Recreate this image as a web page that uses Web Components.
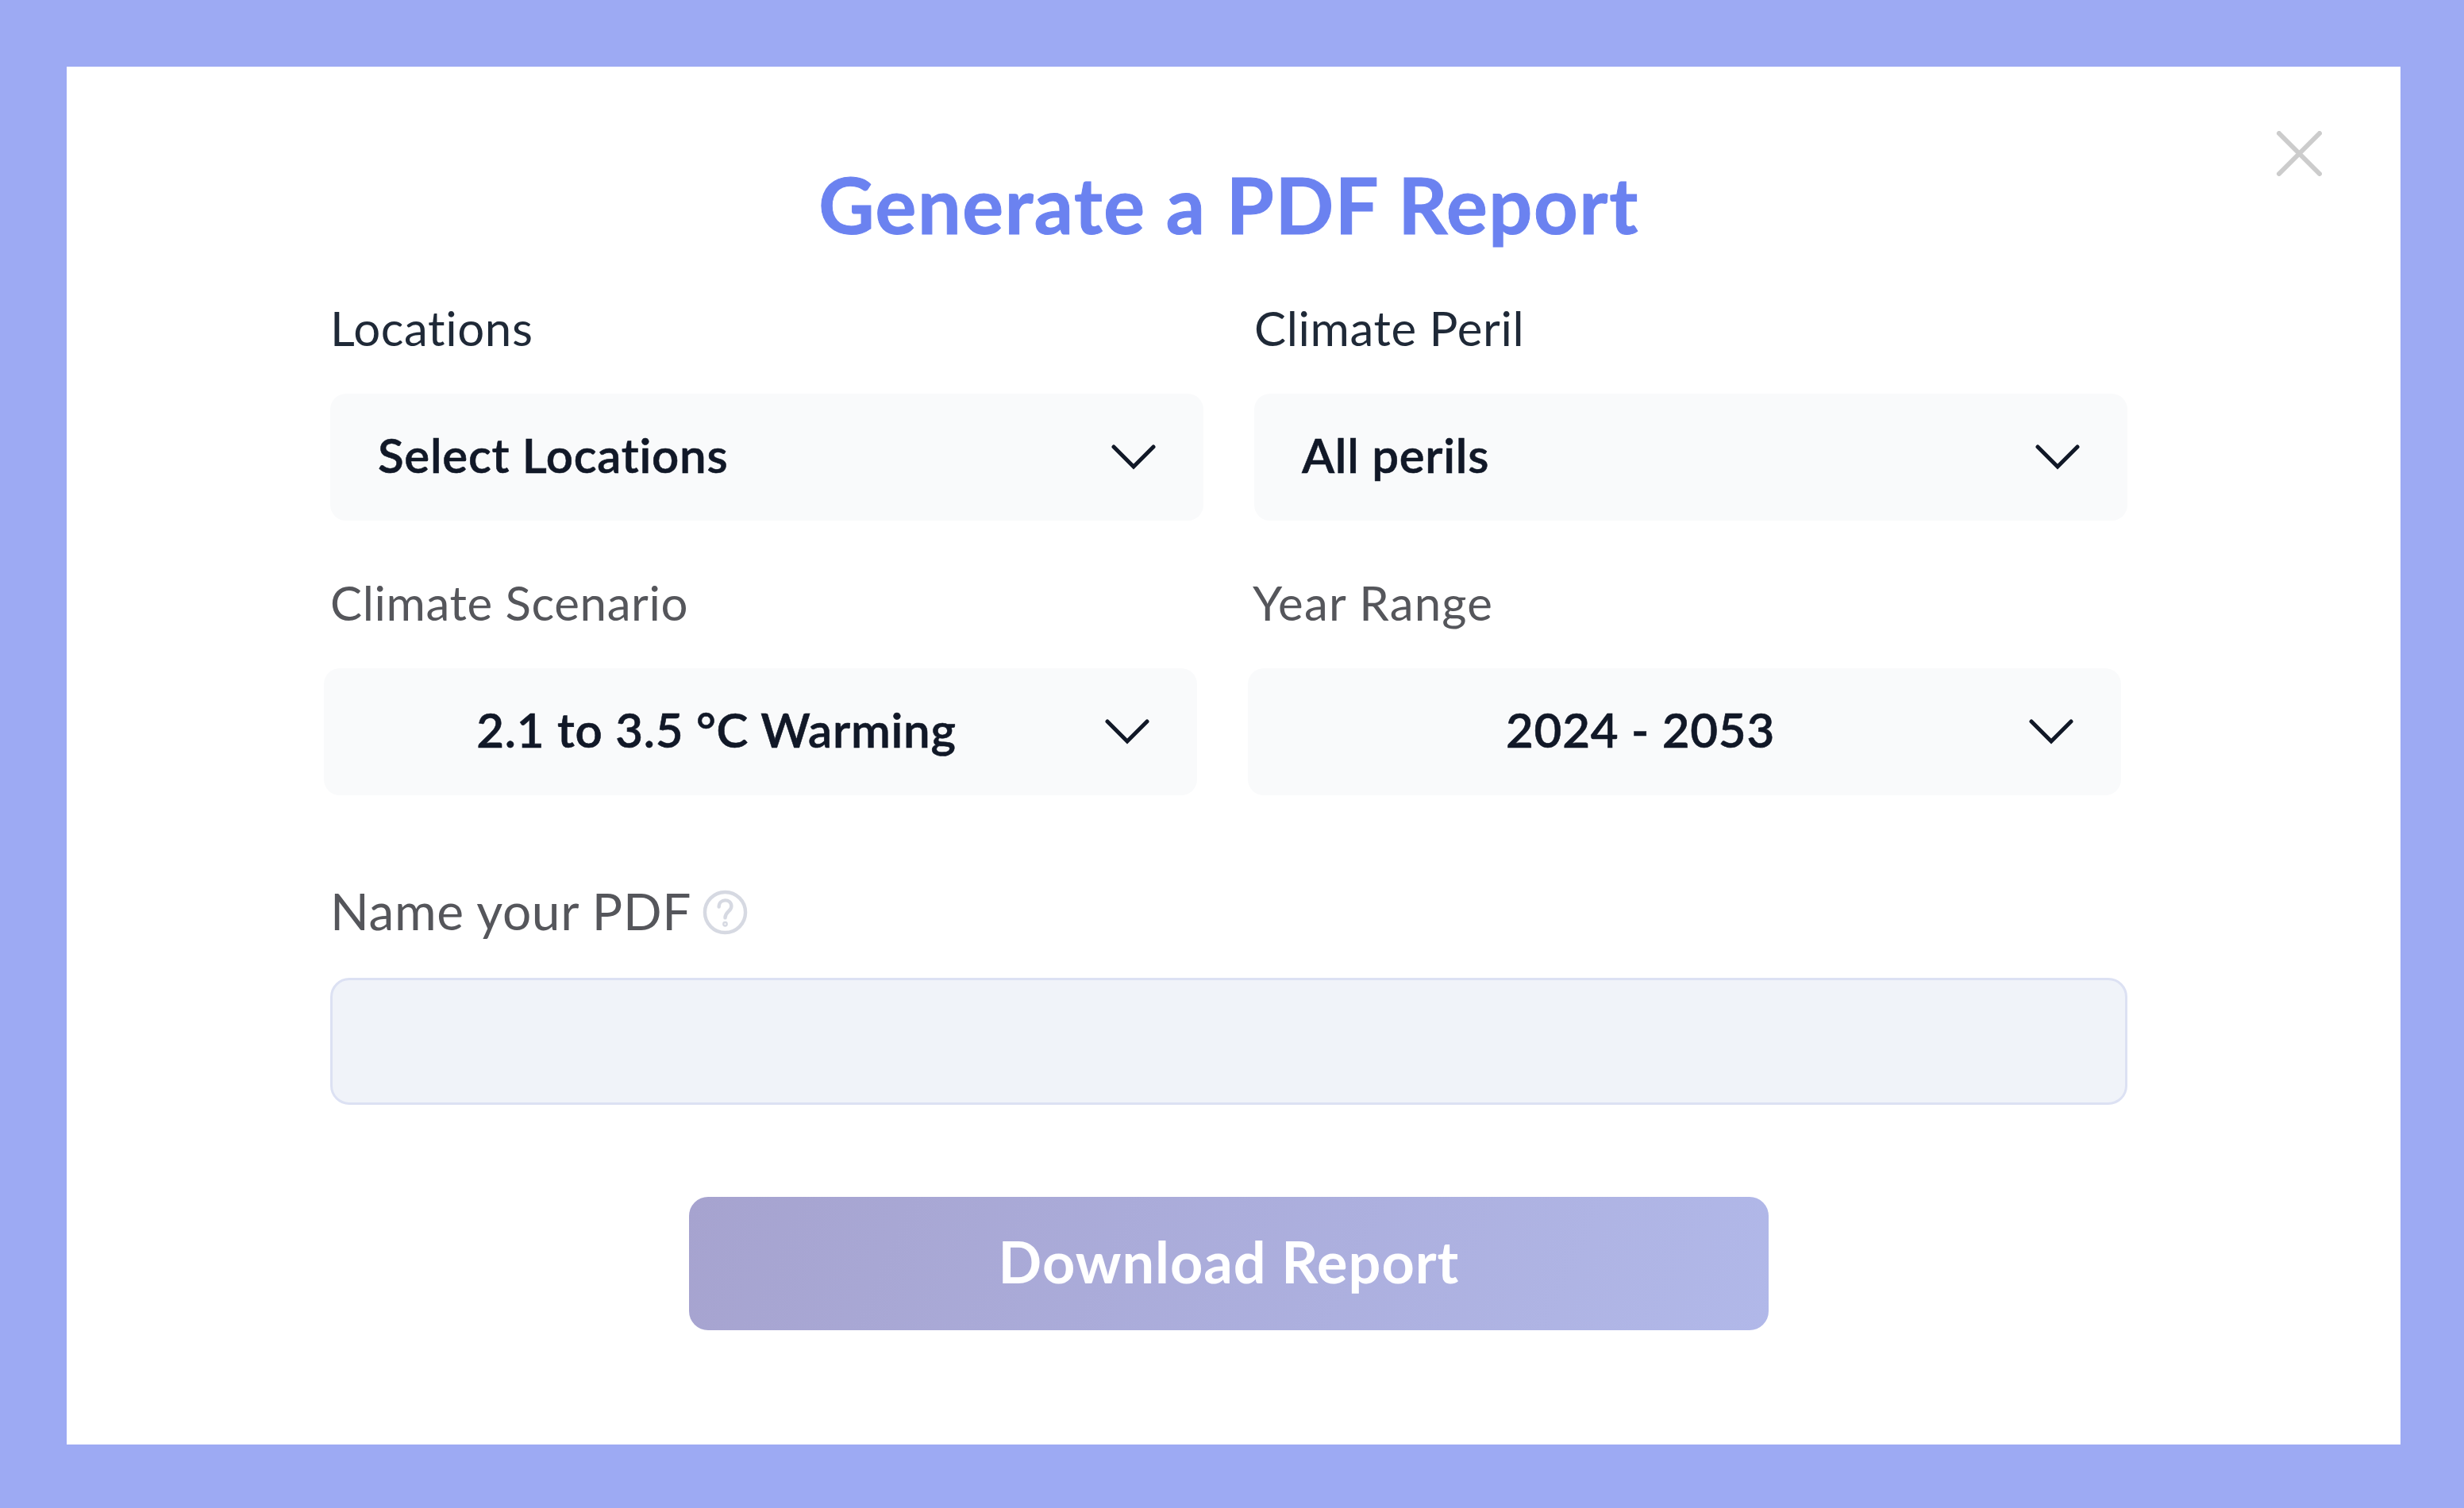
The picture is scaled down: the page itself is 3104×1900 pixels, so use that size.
<!DOCTYPE html>
<html><head><meta charset="utf-8"><style>
html,body{margin:0;height:100%;background:#9daaf3}
body{box-sizing:border-box;padding:84px 80px 80px 84px;height:1900px;font-family:Lato,"Liberation Sans",sans-serif}
</style></head><body>
<report-modal>
<span slot="title">Generate a PDF Report</span>
<form-select label="Locations" value="Select Locations" tone="dark"></form-select>
<form-select label="Climate Peril" value="All perils" tone="dark"></form-select>
<form-select label="Climate Scenario" value="2.1 to 3.5 °C Warming" centered shift></form-select>
<form-select label="Year Range" value="2024 - 2053" centered shift wide></form-select>
</report-modal>
<script>
class FormSelect extends HTMLElement{
 constructor(){super();this.attachShadow({mode:'open'})}
 connectedCallback(){
  const dark=this.getAttribute('tone')==='dark';
  const c=this.hasAttribute('centered'),s=this.hasAttribute('shift'),w=this.hasAttribute('wide');
  this.shadowRoot.innerHTML=`<style>
  :host{display:flex;flex-direction:column;min-width:0}
  .l{height:78px;line-height:78px;font-size:60px;color:${dark?'#1f2937':'#55565b'};margin-bottom:44px;letter-spacing:${w?1.2:.6}px;${w?'margin-left:-2px;':''}}
  .b{height:160px;margin-left:${s?-8:0}px;margin-right:${s?8:0}px;background:#f9fafb;border-radius:20px;display:flex;align-items:center;padding:0 60px;box-sizing:border-box;color:#111827;font-size:60px;font-weight:600;letter-spacing:.75px;-webkit-text-stroke:.6px #111827}
  .v{flex:1;padding-bottom:6px;${c?'text-align:center;padding-right:35px':''}}
  svg{width:56px;height:32px;flex:none;margin-left:20px}
  </style><div class="l">${this.getAttribute('label')}</div><div class="b"><span class="v">${this.getAttribute('value')}</span>
  <svg viewBox="0 0 56 32" fill="none" stroke="#111827" stroke-width="5" stroke-linecap="round" stroke-linejoin="miter"><path d="M3 3 28 28 53 3"/></svg></div>`;
 }
}
customElements.define('form-select',FormSelect);
class PdfName extends HTMLElement{
 constructor(){super();this.attachShadow({mode:'open'}).innerHTML=`<style>
 :host{display:flex;flex-direction:column}
 .l{height:80px;line-height:80px;font-size:64px;color:#55565b;display:flex;align-items:center;gap:14px;margin-bottom:43px;letter-spacing:.65px}
 .l span{padding-bottom:3px}
 .i{height:160px;box-sizing:border-box;background:#f0f3f9;border:3px solid #dce1f3;border-radius:24px}
 svg{width:57px;height:57px;flex:none}
 </style><div class="l"><span>Name your PDF</span><svg viewBox="0 0 58 58" fill="none" stroke="#d6d9e2" stroke-width="4.5"><circle cx="29" cy="29" r="26"/><path d="M21 22c0-11 16-11 16-1 0 7-8 7-8 15" stroke-linecap="round"/><circle cx="29" cy="44" r="1.2"/></svg></div><div class="i"></div>`}
}
customElements.define('pdf-name',PdfName);
class ReportButton extends HTMLElement{
 constructor(){super();this.attachShadow({mode:'open'}).innerHTML=`<style>
 :host{display:flex;justify-content:center}
 .b{width:1360px;height:168px;border-radius:24px;background:linear-gradient(115deg,#a6a3cf,#b1b8e9);color:#fff;font-size:72px;font-weight:700;letter-spacing:1px;box-sizing:border-box;padding-bottom:6px;display:flex;align-items:center;justify-content:center}
 </style><div class="b"><slot></slot></div>`}
}
customElements.define('report-button',ReportButton);
class ReportModal extends HTMLElement{
 constructor(){super();this.attachShadow({mode:'open'}).innerHTML=`<style>
 :host{display:block;position:relative;background:#fff;height:1736px;box-sizing:border-box;padding:114px 344px 0 332px}
 h1{margin:0 0 56px;height:120px;line-height:120px;text-align:center;font-size:97px;font-weight:700;letter-spacing:1.6px;color:#6b82f0;-webkit-text-stroke:1px #6b82f0}
 .g{display:grid;grid-template-columns:1100px 1100px;column-gap:64px;row-gap:64px}
 pdf-name{margin-top:107px}
 report-button{margin-top:116px}
 .x{position:absolute;left:2784px;top:81px;width:57px;height:57px}
 </style>
 <svg class="x" viewBox="0 0 57 57" stroke="#cccccc" stroke-width="6" stroke-linecap="round"><path d="M3 3 54 54M54 3 3 54"/></svg>
 <h1><slot name="title"></slot></h1>
 <div class="g"><slot></slot></div>
 <pdf-name></pdf-name>
 <report-button>Download Report</report-button>`}
}
customElements.define('report-modal',ReportModal);
</script>
</body></html>
